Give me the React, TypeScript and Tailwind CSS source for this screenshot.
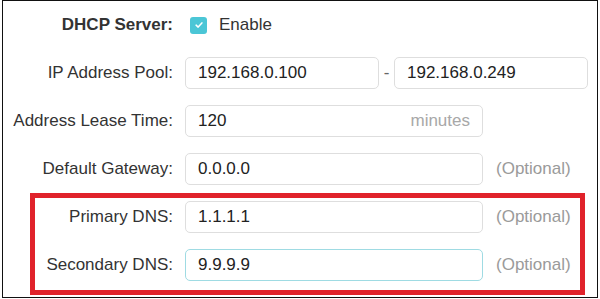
import React from 'react'

const font = { fontFamily: '"Liberation Sans", Arial, sans-serif' }

function Label({ children, bold }: { children: React.ReactNode; bold?: boolean }) {
  return (
    <div
      className={`w-[170px] shrink-0 text-right text-[17px] text-[#333] ${bold ? 'font-bold' : ''}`}
    >
      {children}
    </div>
  )
}

function Field({
  value,
  width,
  suffix,
  focused,
}: {
  value: string
  width: string
  suffix?: string
  focused?: boolean
}) {
  return (
    <div
      className={`flex h-8 items-center justify-between rounded-[5px] border bg-white px-3 text-[17px] text-[#222] ${width} ${
        focused ? 'border-[#9fdbe3]' : 'border-[#dedede]'
      }`}
    >
      <span>{value}</span>
      {suffix && <span className="text-[#a8a8a8]">{suffix}</span>}
    </div>
  )
}

const Optional = () => <span className="ml-[13px] text-[17px] text-[#9a9a9a]">(Optional)</span>

export default function App() {
  return (
    <div className="h-[299px] w-[600px] bg-white" style={font}>
      <div className="relative ml-[2px] flex h-[298px] w-[596px] flex-col gap-4 border border-[#111] pt-2">
        {/* DHCP Server */}
        <div className="flex h-8 items-center">
          <Label bold>DHCP Server:</Label>
          <div className="ml-[17px] flex h-[17px] w-[17px] items-center justify-center rounded-[3px] bg-[#4bc6d6]">
            <svg viewBox="0 0 12 12" className="h-[10px] w-[10px]">
              <path d="M2.5 6.2 L5 8.5 L9.5 3.5" fill="none" stroke="white" strokeWidth="1.8" strokeLinecap="round" strokeLinejoin="round" />
            </svg>
          </div>
          <span className="ml-[12px] text-[17px] text-[#333]">Enable</span>
        </div>

        {/* IP Address Pool */}
        <div className="flex h-8 items-center">
          <Label>IP Address Pool:</Label>
          <div className="ml-3 flex items-center">
            <Field value="192.168.0.100" width="w-[194px]" />
            <span className="w-[15px] text-center text-[17px] text-[#666]">-</span>
            <Field value="192.168.0.249" width="w-[194px]" />
          </div>
        </div>

        {/* Address Lease Time */}
        <div className="flex h-8 items-center">
          <Label>Address Lease Time:</Label>
          <div className="ml-3">
            <Field value="120" width="w-[298px]" suffix="minutes" />
          </div>
        </div>

        {/* Default Gateway */}
        <div className="flex h-8 items-center">
          <Label>Default Gateway:</Label>
          <div className="ml-3 flex items-center">
            <Field value="0.0.0.0" width="w-[298px]" />
            <Optional />
          </div>
        </div>

        {/* Primary DNS */}
        <div className="flex h-8 items-center">
          <Label>Primary DNS:</Label>
          <div className="ml-3 flex items-center">
            <Field value="1.1.1.1" width="w-[298px]" />
            <Optional />
          </div>
        </div>

        {/* Secondary DNS */}
        <div className="flex h-8 items-center">
          <Label>Secondary DNS:</Label>
          <div className="ml-3 flex items-center">
            <Field value="9.9.9.9" width="w-[298px]" focused />
            <Optional />
          </div>
        </div>

        {/* highlight annotation */}
        <div className="pointer-events-none absolute left-[27px] top-[192px] h-[102px] w-[555px] border-[5px] border-[#e0222b]" />
      </div>
    </div>
  )
}
